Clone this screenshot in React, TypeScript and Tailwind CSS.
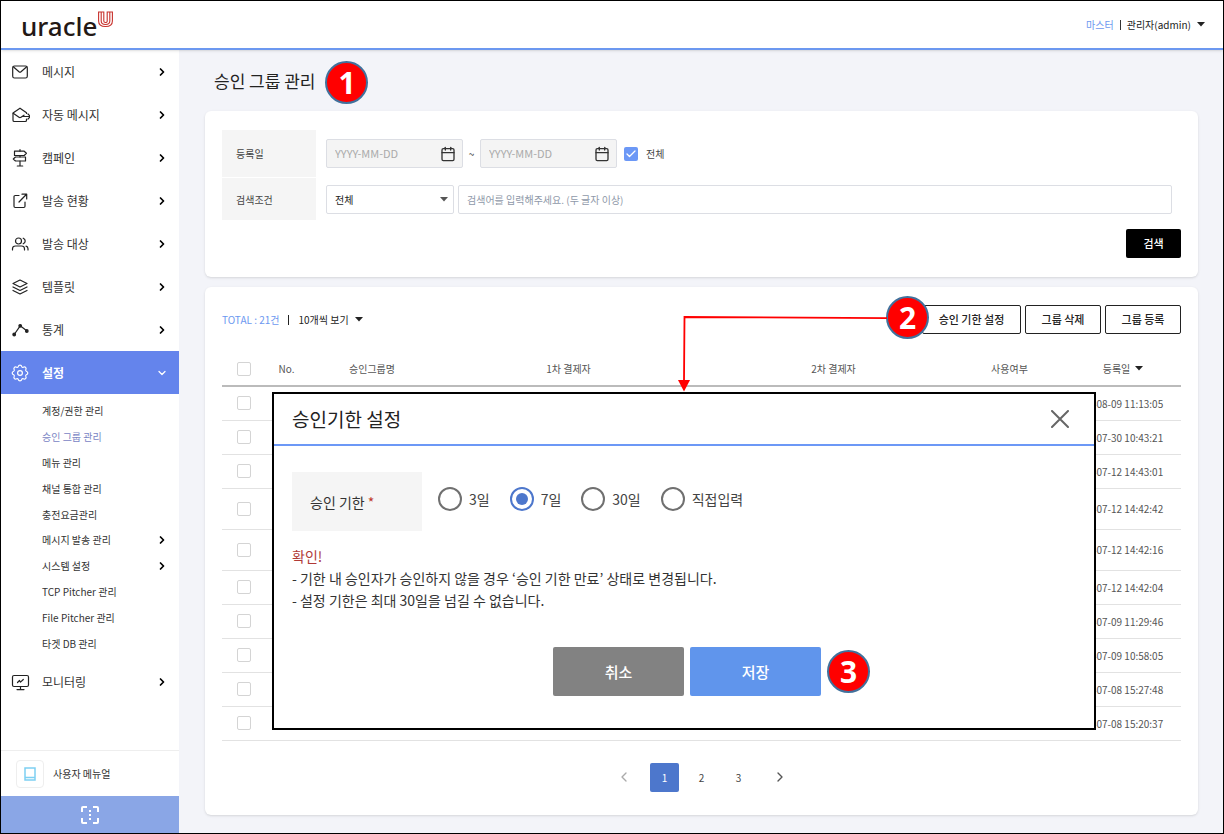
import { Calendar, ChevronDown, ChevronRight, ChevronLeft, Check } from "lucide-react";
import { clsx } from "clsx";
import type { ReactNode } from "react";

type MenuItem = { label: string; icon: ReactNode };

const line = {
  width: 20,
  height: 20,
  viewBox: "0 0 20 20",
  fill: "none",
  stroke: "currentColor",
  strokeWidth: 1.2,
  strokeLinecap: "round",
  strokeLinejoin: "round",
} as const;

const MailIcon = () => (
  <svg {...line}>
    <rect x="2.700" y="4" width="14.600" height="12" rx="1.800" />
    <path d="M3.300 4.800 9 9.700q1 .8 2 0l5.700-4.900" />
  </svg>
);

const AutoMailIcon = () => (
  <svg {...line}>
    <path d="M16.500 8.500v-.8L10 3.200 3 8v7.200q0 1.300 1.300 1.300h10.900q1.300 0 1.300-1.300v-1.200" />
    <path d="m3.200 8.300 5.800 4q1 .7 2 0l3-2.100M13 11.500h7.500M18 9l2.500 2.500L18 14" />
  </svg>
);

const SignIcon = () => (
  <svg {...line}>
    <path d="M10 1.500v1.700M10 7.500v1.500M10 13v5M7.300 18h5.400" />
    <path d="M4.500 3.200h9.700l2.200 2.100-2.200 2.200H4.500zM15.500 9H5.500l-2.200 2 2.200 2h10z" />
  </svg>
);

const ShareIcon = () => (
  <svg {...line}>
    <path d="M9 4.500H5.200Q4 4.500 4 5.700v9.600q0 1.200 1.200 1.200h8.600q1.200 0 1.200-1.200V11M9 11l7.300-7.500M12 3.200h4.700V8" />
  </svg>
);

const UsersIcon = () => (
  <svg {...line}>
    <circle cx="8.500" cy="7" r="3" />
    <path d="M2.500 16v-1.200q0-2.800 3-2.800h6q3 0 3 2.800V16M13.200 4.200q2 .8 2 2.800t-2 2.800M16 12.200q2 .5 2 2.600V16" />
  </svg>
);

const LayersIcon = () => (
  <svg {...line}>
    <path d="m10 3 7 3.500-7 3.500-7-3.500zM3 10l7 3.500 7-3.500M3 13.500 10 17l7-3.500" />
  </svg>
);

const StatsIcon = () => (
  <svg {...line}>
    <path d="m4.200 14.500 6-8.700 6.500 5" />
    <circle cx="4.200" cy="14.500" r="1.300" fill="currentColor" />
    <circle cx="10.200" cy="5.800" r="1.300" fill="currentColor" />
    <circle cx="16.800" cy="11" r="1.300" fill="currentColor" />
  </svg>
);

const GearIcon = () => (
  <svg {...line}>
    <circle cx="10" cy="10" r="2.400" />
    <path d="M10 2.200q1.400 0 1.800 1.500.5.900 1.500.5 1.400-.8 2.300.2t.2 2.400q-.4 1 .5 1.400 1.500.5 1.500 1.800t-1.500 1.800q-.9.500-.5 1.400.8 1.400-.2 2.400t-2.300.2q-1-.4-1.500.5-.4 1.500-1.800 1.500t-1.800-1.500q-.5-.9-1.500-.5-1.400.8-2.300-.2t-.2-2.400q.4-.9-.5-1.400-1.500-.5-1.500-1.800t1.500-1.800q.9-.4.500-1.400-.7-1.400.2-2.400t2.300-.2q1 .4 1.500-.5.4-1.500 1.800-1.500z" />
  </svg>
);

const MonitorIcon = () => (
  <svg {...line}>
    <rect x="2.500" y="3.500" width="16" height="11" rx="1.500" />
    <path d="M10.500 14.500v3M7 17.600h7M7.500 10.500l2-2 1 1.600 2.800-2.600" />
  </svg>
);

const topMenus: MenuItem[] = [
  { label: "메시지", icon: <MailIcon /> },
  { label: "자동 메시지", icon: <AutoMailIcon /> },
  { label: "캠페인", icon: <SignIcon /> },
  { label: "발송 현황", icon: <ShareIcon /> },
  { label: "발송 대상", icon: <UsersIcon /> },
  { label: "템플릿", icon: <LayersIcon /> },
  { label: "통계", icon: <StatsIcon /> },
];

const subMenus = [
  { label: "계정/권한 관리" },
  { label: "승인 그룹 관리", active: true },
  { label: "메뉴 관리" },
  { label: "채널 통합 관리" },
  { label: "충전요금관리" },
  { label: "메시지 발송 관리", more: true },
  { label: "시스템 설정", more: true },
  { label: "TCP Pitcher 관리" },
  { label: "File Pitcher 관리" },
  { label: "타겟 DB 관리" },
];

const rows = [
  { date: "2024-08-09 11:13:05" },
  { date: "2024-07-30 10:43:21" },
  { date: "2024-07-12 14:43:01" },
  { date: "2024-07-12 14:42:42", tall: true },
  { date: "2024-07-12 14:42:16", tall: true },
  { date: "2024-07-12 14:42:04" },
  { date: "2024-07-09 11:29:46" },
  { date: "2024-07-09 10:58:05" },
  { date: "2024-07-08 15:27:48" },
  { date: "2024-07-08 15:20:37" },
];

const terms = ["3일", "7일", "30일", "직접입력"];

function Caret({ className }: { className?: string }) {
  return (
    <svg className={className} width="8" height="5" viewBox="0 0 8 5" fill="currentColor">
      <path d="M0 0h8L4 4.500z" />
    </svg>
  );
}

function StepBadge({ n, className }: { n: number; className?: string }) {
  return (
    <span
      className={clsx(
        "flex size-[43px] shrink-0 items-center justify-center rounded-full border-2 border-[#41719c] bg-[#ff0000] font-['Noto_Sans'] text-[30px] leading-none font-bold text-white",
        className
      )}
    >
      {n}
    </span>
  );
}

function MenuLink({ label, icon }: MenuItem) {
  return (
    <a href="#" className="flex h-[43px] items-center pr-[11px] pl-[9px] text-xs text-[#333]">
      <span className="w-8 text-[#222]">{icon}</span>
      <span className="flex-1">{label}</span>
      <ChevronRight size={12} strokeWidth={3.5} className="text-black" />
    </a>
  );
}

function Sidebar() {
  return (
    <aside className="flex w-[178px] shrink-0 flex-col bg-white">
      <nav className="flex-1">
        {topMenus.map((m) => (
          <MenuLink key={m.label} {...m} />
        ))}
        <a href="#" className="flex h-[43px] items-center bg-[#6484ec] pr-[11px] pl-[9px] text-xs font-bold text-white">
          <span className="w-8"><GearIcon /></span>
          <span className="flex-1">설정</span>
          <ChevronDown size={12} strokeWidth={2.5} />
        </a>
        <ul className="grid h-[266px] auto-rows-fr py-1 text-[10px]">
          {subMenus.map((s) => (
            <li key={s.label}>
              <a
                href="#"
                className={clsx("flex h-full items-center pr-[11px] pl-[41px]", s.active ? "text-[#7a84c4]" : "text-[#333]")}
              >
                <span className="flex-1">{s.label}</span>
                {s.more && <ChevronRight size={12} strokeWidth={3.5} className="text-black" />}
              </a>
            </li>
          ))}
        </ul>
        <MenuLink label="모니터링" icon={<MonitorIcon />} />
      </nav>
      <a href="#" className="flex h-[46px] items-center gap-[9px] border-t border-[#eee] pl-[15px] text-[10px] text-[#333]">
        <span className="flex size-7 items-center justify-center rounded border border-[#eee]">
          <svg width="12" height="14" viewBox="0 0 12 14" fill="none" stroke="#7dd0f2" strokeWidth="1.5">
            <path d="M1 1h10v12H1zM1 10.500h10" />
          </svg>
        </span>
        사용자 메뉴얼
      </a>
      <button type="button" aria-label="메뉴 접기" className="flex h-[37px] items-center justify-center bg-[#8aa6e6] text-white">
        <svg width="18" height="18" viewBox="0 0 18 18" fill="none" stroke="currentColor" strokeWidth="2">
          <path d="M1 6V2q0-1 1-1h4M12 1h4q1 0 1 1v4M17 12v4q0 1-1 1h-4M6 17H2q-1 0-1-1v-4" />
          <path d="M9 4v10" strokeDasharray="2 2" />
        </svg>
      </button>
    </aside>
  );
}

function Header() {
  return (
    <header className="relative z-10 flex h-[49px] items-center justify-between border-b-2 border-[#6c98f0] bg-white pr-[18px] pl-5 shadow-sm">
      <a href="#" className="flex items-start pt-[3px] text-[#231815]">
        <span className="font-['Noto_Sans'] text-[26px] leading-[30px] font-medium">uracle</span>
        <svg width="17" height="17" viewBox="0 0 17 17" fill="none" stroke="#c8322d" strokeWidth="1.100">
          <path d="M1.600 1h5.200v9q0 1.500 1.700 1.500T10.200 10V1h5.200v9q0 5.500-6.900 5.500T1.600 10z" />
          <path d="M4.200 1v9q0 3.500 4.300 3.500t4.300-3.500V1" />
        </svg>
      </a>
      <div className="flex items-center text-[10px] text-[#222]">
        <span className="text-[#6c98f0]">마스터</span>
        <span className="mx-[6px] h-[10px] w-px bg-[#333]" />
        <button type="button" className="flex items-center gap-[6px]">
          관리자(admin)
          <Caret />
        </button>
      </div>
    </header>
  );
}

function DateField({ label }: { label: string }) {
  return (
    <div className="flex h-[29px] w-[137px] items-center rounded-xs border border-[#dcdee4] bg-[#f4f4f4] pr-[6px] pl-2">
      <input
        type="text"
        disabled
        aria-label={label}
        placeholder="YYYY-MM-DD"
        className="w-full min-w-0 flex-1 text-[11px] placeholder:text-[#aaa]"
      />
      <Calendar size={16} className="shrink-0 text-[#333]" />
    </div>
  );
}

function SearchPanel() {
  return (
    <section className="rounded-md bg-white px-[17px] pt-[19px] pb-[19px] text-[10px] text-[#444] shadow-sm">
      <div className="grid grid-cols-[94px_1fr] gap-x-[10px] gap-y-px">
        <div className="flex h-[47px] items-center bg-[#f5f5f5] pl-[14px]">등록일</div>
        <div className="flex items-center">
          <DateField label="등록일 시작" />
          <span className="w-[17px] text-center">~</span>
          <DateField label="등록일 종료" />
          <label className="ml-[7px] flex items-center gap-2">
            <span className="grid">
              <input type="checkbox" defaultChecked className="size-[14px] appearance-none rounded-xs bg-[#6c98f6] [grid-area:1/1]" />
              <Check size={12} strokeWidth={2.5} className="m-px text-white [grid-area:1/1]" />
            </span>
            전체
          </label>
        </div>
        <label htmlFor="keyword" className="flex h-[42px] items-center bg-[#f5f5f5] pl-[14px]">검색조건</label>
        <div className="flex items-center gap-1 pr-[9px]">
          <div className="grid w-32 items-center">
            <select aria-label="검색조건" className="h-[29px] w-full appearance-none rounded-xs border border-[#dcdee4] pl-2 text-[#222] [grid-area:1/1]">
              <option>전체</option>
            </select>
            <Caret className="pointer-events-none mr-[6px] justify-self-end text-[#555] [grid-area:1/1]" />
          </div>
          <input
            id="keyword"
            type="text"
            placeholder="검색어를 입력해주세요. (두 글자 이상)"
            className="h-[29px] flex-1 rounded-xs border border-[#dcdee4] px-2 placeholder:text-[#8f99a9]"
          />
        </div>
      </div>
      <div className="mt-[9px] flex justify-end">
        <button type="button" className="h-[29px] w-[55px] rounded-xs bg-black text-[11px] font-medium text-white">
          검색
        </button>
      </div>
    </section>
  );
}

const box = "block size-[14px] mx-auto appearance-none rounded-xs border border-[#d4d4d4] bg-white";
const outlineButton = "h-[29px] rounded-xs border border-[#222] bg-white text-[11px] font-medium text-[#222]";

function GroupTable() {
  return (
    <table className="mt-[18px] w-full table-fixed border-collapse text-[10px] text-[#555]">
      <colgroup>
        <col className="w-[43px]" />
        <col className="w-[43px]" />
        <col className="w-32" />
        <col />
        <col />
        <col className="w-[87px]" />
        <col className="w-32" />
      </colgroup>
      <thead>
        <tr className="h-[34px] border-b-2 border-[#bbb] [&>th]:font-normal">
          <th><input type="checkbox" aria-label="전체 선택" className={box} /></th>
          <th>No.</th>
          <th>승인그룹명</th>
          <th>1차 결제자</th>
          <th>2차 결제자</th>
          <th>사용여부</th>
          <th>
            <button type="button" className="inline-flex items-center gap-[5px] pl-3">
              등록일
              <Caret className="text-[#222]" />
            </button>
          </th>
        </tr>
      </thead>
      <tbody>
        {rows.map((r) => (
          <tr key={r.date} className={clsx("border-b border-[#e2e2e2]", r.tall ? "h-[41px]" : "h-[34px]")}>
            <td><input type="checkbox" aria-label={r.date} className={box} /></td>
            <td colSpan={5} />
            <td className="text-center">{r.date}</td>
          </tr>
        ))}
      </tbody>
    </table>
  );
}

function Pagination() {
  return (
    <nav className="mt-[22px] flex items-center justify-center gap-2 text-[10px] text-[#444]">
      <button type="button" aria-label="이전" className="mr-1 flex size-[29px] items-center justify-center text-[#aaa]">
        <ChevronLeft size={16} />
      </button>
      <button type="button" className="size-[29px] rounded-xs bg-[#4d77cc] text-white">1</button>
      <button type="button" className="size-[29px]">2</button>
      <button type="button" className="size-[29px]">3</button>
      <button type="button" aria-label="다음" className="ml-1 flex size-[29px] items-center justify-center text-[#555]">
        <ChevronRight size={16} />
      </button>
    </nav>
  );
}

function TermDialog() {
  return (
    <div
      role="dialog"
      aria-labelledby="term-title"
      className="absolute top-[105px] right-[102px] left-[67px] border-2 border-black bg-white text-sm text-[#333]"
    >
      <div className="flex h-[52px] items-center justify-between border-b-2 border-[#6c98f6] pr-[25px] pl-[18px]">
        <h2 id="term-title" className="text-[19px] text-[#222]">승인기한 설정</h2>
        <button type="button" aria-label="닫기" className="text-[#666]">
          <svg width="18" height="18" viewBox="0 0 18 18" stroke="currentColor" strokeWidth="2" strokeLinecap="round">
            <path d="m1 1 16 16M17 1 1 17" />
          </svg>
        </button>
      </div>
      <div className="px-[18px] pt-[26px] pb-8">
        <div role="radiogroup" aria-labelledby="term-label" className="flex items-center gap-4">
          <div id="term-label" className="flex h-[59px] w-[130px] items-center bg-[#f5f5f5] pl-[18px]">
            승인 기한&nbsp;<span className="text-[#c0392b]">*</span>
          </div>
          <div className="flex gap-5 pb-[6px]">
            {terms.map((t) => (
              <label key={t} className="flex items-center gap-[7px] text-[#444]">
                <input
                  type="radio"
                  name="term"
                  defaultChecked={t === "7일"}
                  className="size-6 appearance-none rounded-full border-2 border-[#707070] bg-clip-content p-1 checked:border-[#4d77cc] checked:bg-[#4d77cc]"
                />
                {t}
              </label>
            ))}
          </div>
        </div>
        <div className="mt-[14px] leading-[22px]">
          <p className="text-[#b03a36]">확인!</p>
          <p>- 기한 내 승인자가 승인하지 않을 경우 ‘승인 기한 만료’ 상태로 변경됩니다.</p>
          <p>- 설정 기한은 최대 30일을 넘길 수 없습니다.</p>
        </div>
        <div className="mt-9 flex justify-center gap-[6px] pl-[6px] text-[15px] font-medium text-white">
          <button type="button" className="h-[49px] w-[131px] rounded-xs bg-[#828282]">취소</button>
          <div className="relative">
            <button type="button" className="h-[49px] w-[131px] rounded-xs bg-[#6095ec]">저장</button>
            <StepBadge n={3} className="absolute top-[3px] left-[137px]" />
          </div>
        </div>
      </div>
    </div>
  );
}

export default function App() {
  return (
    <div className="flex min-h-screen flex-col border border-black bg-[#f3f4f9] font-['Noto_Sans_CJK_KR',sans-serif]">
      <Header />
      <div className="flex flex-1">
        <Sidebar />
        <main className="min-w-0 flex-1 pr-[25px] pb-[18px] pl-[26px]">
          <div className="flex h-[61px] items-center gap-[10px] pt-1 pl-[9px]">
            <h1 className="pb-[3px] text-[17px] text-[#222]">승인 그룹 관리</h1>
            <StepBadge n={1} />
          </div>
          <SearchPanel />
          <section className="relative mt-[10px] rounded-md bg-white px-[17px] pt-[18px] pb-[23px] shadow-sm">
            <div className="flex items-center justify-between">
              <div className="flex items-center text-[10px] text-[#222]">
                <span className="text-[#6c98f0]">TOTAL : 21건</span>
                <span className="mx-[9px] h-[10px] w-px bg-[#222]" />
                <button type="button" className="flex items-center gap-[6px]">
                  10개씩 보기
                  <Caret />
                </button>
              </div>
              <div className="flex gap-1">
                <div className="relative">
                  <button type="button" className={clsx(outlineButton, "w-[99px]")}>승인 기한 설정</button>
                  <StepBadge n={2} className="absolute top-[-9px] left-[-36px]" />
                </div>
                <button type="button" className={clsx(outlineButton, "w-[76px]")}>그룹 삭제</button>
                <button type="button" className={clsx(outlineButton, "w-[76px]")}>그룹 등록</button>
              </div>
            </div>
            <GroupTable />
            <Pagination />
            <TermDialog />
            <svg className="absolute top-[28px] right-[311px]" width="209" height="77" viewBox="0 0 209 77" fill="none">
              <path d="M209 3.200 6.500 2 6 66" stroke="#ff0000" strokeWidth="1.800" />
              <path d="M0 65h12L6 76.500z" fill="#ff0000" />
            </svg>
          </section>
        </main>
      </div>
    </div>
  );
}
